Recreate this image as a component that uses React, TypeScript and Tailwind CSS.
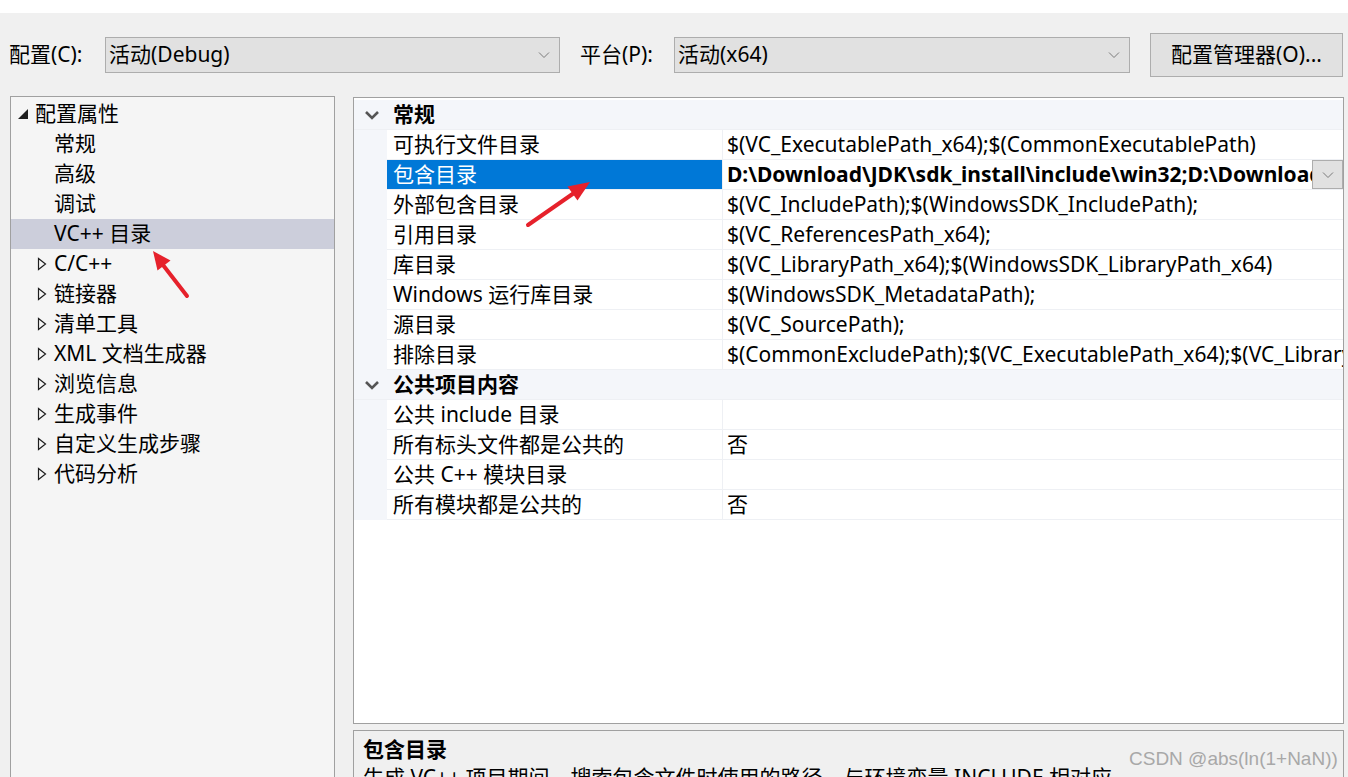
import React from "react";

const FONT = { fontFamily: '"Noto Sans", "Noto Sans CJK SC", sans-serif' };

function Chevron({ className = "" }: { className?: string }) {
  return (
    <svg width="12" height="8" viewBox="0 0 12 8" className={className}>
      <path d="M1 1.5 L6 6.5 L11 1.5" fill="none" stroke="#7a7a7a" strokeWidth="1" />
    </svg>
  );
}

function CatChevron() {
  return (
    <svg width="16" height="10" viewBox="0 0 16 10">
      <path d="M2 2 L8 8 L14 2" fill="none" stroke="#555" strokeWidth="2.6" />
    </svg>
  );
}

function Tri() {
  return (
    <svg width="10" height="14" viewBox="0 0 10 14" className="shrink-0">
      <path d="M1.5 1.5 L8.5 7 L1.5 12.5 Z" fill="none" stroke="#1e1e1e" strokeWidth="1.2" />
    </svg>
  );
}

const treeChildren = ["常规", "高级", "调试", "VC++ 目录"];
const treeTop = ["C/C++", "链接器", "清单工具", "XML 文档生成器", "浏览信息", "生成事件", "自定义生成步骤", "代码分析"];

type Row = { label: string; value: string; selected?: boolean };
const general: Row[] = [
  { label: "可执行文件目录", value: "$(VC_ExecutablePath_x64);$(CommonExecutablePath)" },
  { label: "包含目录", value: "D:\\Download\\JDK\\sdk_install\\include\\win32;D:\\Download\\JDK\\sdk_install\\include", selected: true },
  { label: "外部包含目录", value: "$(VC_IncludePath);$(WindowsSDK_IncludePath);" },
  { label: "引用目录", value: "$(VC_ReferencesPath_x64);" },
  { label: "库目录", value: "$(VC_LibraryPath_x64);$(WindowsSDK_LibraryPath_x64)" },
  { label: "Windows 运行库目录", value: "$(WindowsSDK_MetadataPath);" },
  { label: "源目录", value: "$(VC_SourcePath);" },
  { label: "排除目录", value: "$(CommonExcludePath);$(VC_ExecutablePath_x64);$(VC_LibraryPath_x64)" },
];
const pub: Row[] = [
  { label: "公共 include 目录", value: "" },
  { label: "所有标头文件都是公共的", value: "否" },
  { label: "公共 C++ 模块目录", value: "" },
  { label: "所有模块都是公共的", value: "否" },
];

function Category({ title }: { title: string }) {
  return (
    <div className="flex h-[30px] items-center bg-[#f4f6fa] border-b border-[#eef0f4]">
      <div className="flex w-[33px] shrink-0 items-center justify-center pl-[2px]">
        <CatChevron />
      </div>
      <div className="pl-[6px] font-bold text-black">{title}</div>
    </div>
  );
}

function PropRow({ r }: { r: Row }) {
  return (
    <div className="flex h-[30px]">
      <div className="w-[33px] shrink-0 bg-[#f4f6fa]" />
      <div
        className={
          "flex w-[336px] shrink-0 items-center border-b border-r border-[#eef0f4] pl-[6px] " +
          (r.selected ? "bg-[#0078d7] text-white" : "bg-white text-black")
        }
      >
        <span className="whitespace-nowrap">{r.label}</span>
      </div>
      <div className="relative flex min-w-0 flex-1 items-center overflow-hidden border-b border-[#eef0f4] bg-white pl-[4px]">
        <span className={"whitespace-nowrap " + (r.selected ? "font-bold text-black" : "text-black")}>{r.value}</span>
        {r.selected && (
          <div className="absolute right-0 top-0 flex h-[29px] w-[31px] items-center justify-center border border-[#adadad] bg-[#e1e1e1]">
            <Chevron />
          </div>
        )}
      </div>
    </div>
  );
}

export default function App() {
  return (
    <div className="relative h-[777px] w-[1348px] overflow-hidden bg-[#f0f0f0] text-[21px] text-black" style={FONT}>
      <div className="h-[13px] bg-white" />
      {/* toolbar */}
      <div className="flex h-[83px] items-center">
        <div className="w-[105px] shrink-0 pl-[9px]">配置(C):</div>
        <div className="flex h-[36px] w-[455px] shrink-0 items-center justify-between border border-[#adadad] bg-[#e1e1e1] pl-[3px] pr-[9px]">
          <span>活动(Debug)</span>
          <Chevron />
        </div>
        <div className="ml-[20px] w-[94px] shrink-0">平台(P):</div>
        <div className="flex h-[36px] w-[456px] shrink-0 items-center justify-between border border-[#adadad] bg-[#e1e1e1] pl-[3px] pr-[9px]">
          <span>活动(x64)</span>
          <Chevron />
        </div>
        <div className="ml-[20px] flex h-[44px] w-[193px] shrink-0 items-center justify-center border border-[#adadad] bg-[#e1e1e1]">
          配置管理器(O)...
        </div>
      </div>
      {/* panels */}
      <div className="flex">
        <div className="ml-[10px] h-[700px] w-[325px] shrink-0 border border-[#a0a0a0] bg-[#f5f5f5] pt-[2px]">
          <div className="flex h-[30px] items-center pl-[7px]">
            <svg width="10" height="10" viewBox="0 0 10 10" className="mr-[7px]">
              <path d="M10 0 L10 10 L0 10 Z" fill="#1e1e1e" />
            </svg>
            <span>配置属性</span>
          </div>
          {treeChildren.map((t, i) => (
            <div
              key={t}
              className={"flex h-[30px] items-center pl-[43px] " + (i === 3 ? "bg-[#cccedb]" : "")}
            >
              {t}
            </div>
          ))}
          {treeTop.map((t) => (
            <div key={t} className="flex h-[30px] items-center pl-[26px]">
              <Tri />
              <span className="ml-[7px]">{t}</span>
            </div>
          ))}
        </div>
        <div className="ml-[18px] flex w-[991px] shrink-0 flex-col">
          <div className="mt-[1px] h-[627px] border border-[#a0a0a0] bg-white pt-[2px]">
            <Category title="常规" />
            {general.map((r) => (
              <PropRow key={r.label} r={r} />
            ))}
            <Category title="公共项目内容" />
            {pub.map((r) => (
              <PropRow key={r.label} r={r} />
            ))}
          </div>
          <div className="mt-[6px] h-[60px] border border-[#a0a0a0] bg-[#f0f0f0] pl-[9px] pt-[4px]">
            <div className="font-bold leading-[28px]">包含目录</div>
            <div className="whitespace-nowrap leading-[28px]">
              生成 VC++ 项目期间，搜索包含文件时使用的路径。与环境变量 INCLUDE 相对应。
            </div>
          </div>
        </div>
      </div>
      {/* watermark */}
      <div
        className="absolute left-[1129px] top-[745px] text-[19px] text-[#a8a8a8]"
        style={{ fontFamily: '"Liberation Sans", Arial, sans-serif' }}
      >
        CSDN @abs(ln(1+NaN))
      </div>
      {/* red annotation arrows */}
      <svg className="pointer-events-none absolute left-0 top-0" width="1348" height="777" viewBox="0 0 1348 777">
        <line x1="528" y1="225" x2="574" y2="193" stroke="#e6212b" strokeWidth="4" strokeLinecap="round" />
        <path d="M590 182 L577.5 200.5 L567.5 186.5 Z" fill="#e6212b" />
        <line x1="187" y1="296" x2="163" y2="265" stroke="#e6212b" strokeWidth="4" strokeLinecap="round" />
        <path d="M153 251 L170.5 260.5 L157.5 270.5 Z" fill="#e6212b" />
      </svg>
    </div>
  );
}
